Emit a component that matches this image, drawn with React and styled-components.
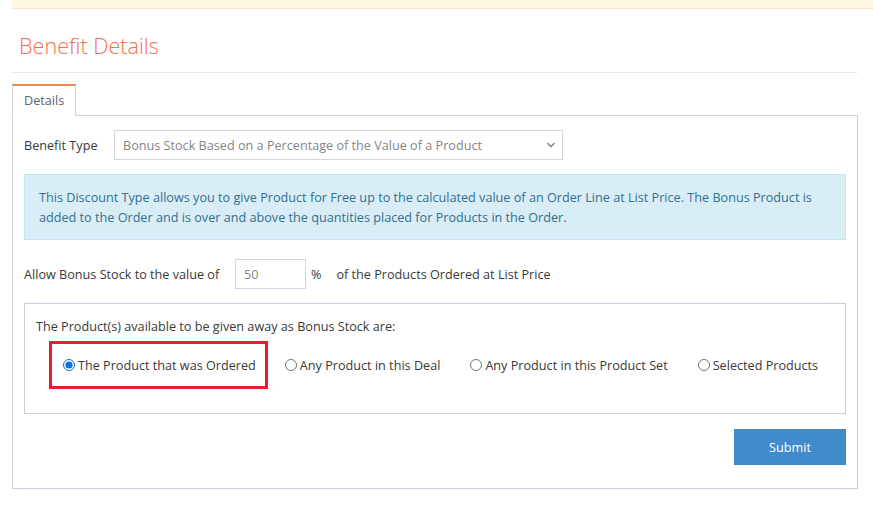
import React, {useState} from "react";
import styled, {createGlobalStyle} from "styled-components";

const baseSize = "12.65px";

const GlobalStyle = createGlobalStyle`
    html, body {
        margin: 0;
        padding: 0;
        background: #fff;
    }
    body {
        font-family: "Open Sans", "Liberation Sans", sans-serif;
        font-size: ${baseSize};
        color: #393939;
    }
    * {
        box-sizing: border-box;
    }
`;

const Page = styled.div`
    width: 873px;
    padding: 0 15px 0 12px;
`;

const AlertStrip = styled.div`
    height: 9px;
    margin-right: -15px;
    background: #fcf8e3;
    border-bottom: 1px solid #f6e6c3;
`;

const Header = styled.div`
    padding: 23px 0 12px 7px;
    border-bottom: 1px dotted #d9d9d9;
`;

const Title = styled.h1`
    margin: 0;
    font-family: "Open Sans", "Liberation Sans", sans-serif;
    font-weight: 300;
    font-size: 21.6px;
    line-height: 28px;
    color: #f2704c;
`;

const Tabs = styled.ul`
    list-style: none;
    margin: 11px 0 -1px;
    padding: 0;
    display: flex;
    position: relative;
    z-index: 1;
`;

const Tab = styled.li`
    height: 32px;
    padding: 0 11px 1px;
    display: flex;
    align-items: center;
    background: #fff;
    color: #576373;
    border: 1px solid #c5d0dc;
    border-top: 2px solid #f4844c;
    border-bottom-color: ${(props) => (props.active ? "#fff" : "#c5d0dc")};
`;

const Panel = styled.div`
    border: 1px solid #c5d0dc;
    padding: 14px 11px 23px;
`;

const FieldRow = styled.div`
    display: flex;
    align-items: center;
    white-space: nowrap;
    margin-top: ${(props) => props.top || "0px"};
`;

const Label = styled.label`
    width: ${(props) => props.width || "auto"};
    flex-shrink: 0;
`;

const SelectWrap = styled.div`
    position: relative;
    width: 449px;
`;

const Select = styled.select`
    appearance: none;
    width: 100%;
    height: 30px;
    padding: 0 30px 0 8px;
    border: 1px solid #d5d5d5;
    border-radius: 0;
    background: #fff;
    color: #858585;
    font-family: inherit;
    font-size: ${baseSize};
    outline: none;
`;

const Chevron = styled.svg`
    position: absolute;
    right: 7px;
    top: 11px;
    pointer-events: none;
`;

const InfoBox = styled.div`
    margin-top: 14px;
    padding: 12px 14px;
    background: #d9edf7;
    border: 1px solid #bce8f1;
    color: #31708f;
    line-height: 20px;
`;

const SmallInput = styled.input`
    width: 71px;
    height: 30px;
    padding: 0 8px;
    border: 1px solid #d5d5d5;
    color: #858585;
    font-family: inherit;
    font-size: ${baseSize};
    outline: none;
`;

const Unit = styled.span`
    margin: 0 15px 0 5px;
`;

const GroupBox = styled.div`
    margin-top: 14px;
    border: 1px solid #c5d0dc;
    padding: 13px 11px 24px;
`;

const GroupLabel = styled.div`
    line-height: 18px;
`;

const Options = styled.div`
    display: flex;
    align-items: center;
    gap: 30px;
    margin-top: 6px;
    padding-left: 13px;
    white-space: nowrap;
`;

const Highlight = styled.div`
    border: 3px solid #e3202a;
    padding: 12px 9px 12px 11px;
    margin-right: -13px;
    display: flex;
    align-items: center;
`;

const Option = styled.label`
    display: flex;
    align-items: center;
    line-height: 18px;
    cursor: pointer;
`;

const Radio = styled.input`
    width: 12px;
    height: 12px;
    margin: 0 3px 0 0;
    accent-color: #0a74da;
`;

const Footer = styled.div`
    display: flex;
    justify-content: flex-end;
    margin-top: 15px;
`;

const SubmitButton = styled.button`
    width: 112px;
    height: 36px;
    border: none;
    background: #428bca;
    color: #fff;
    font-family: inherit;
    font-size: ${baseSize};
    cursor: pointer;
`;

const options = [
    "The Product that was Ordered",
    "Any Product in this Deal",
    "Any Product in this Product Set",
    "Selected Products",
];

const App = () => {
    const [picked, setPicked] = useState(0);

    const renderOption = (text, i) => (
        <Option key={text}>
            <Radio type="radio" name="bonus" checked={picked === i} onChange={() => setPicked(i)}/>
            {text}
        </Option>
    );

    return (
        <>
            <GlobalStyle/>
            <Page>
                <AlertStrip/>
                <Header>
                    <Title>Benefit Details</Title>
                </Header>
                <Tabs>
                    <Tab active>Details</Tab>
                </Tabs>
                <Panel>
                    <FieldRow>
                        <Label width="90px">Benefit Type</Label>
                        <SelectWrap>
                            <Select defaultValue="pct">
                                <option value="pct">Bonus Stock Based on a Percentage of the Value of a Product</option>
                            </Select>
                            <Chevron width="10" height="8" viewBox="0 0 10 8">
                                <path d="M1.5 2 L5 5.5 L8.5 2" fill="none" stroke="#8a8a8a" strokeWidth="1.6"/>
                            </Chevron>
                        </SelectWrap>
                    </FieldRow>
                    <InfoBox>
                        This Discount Type allows you to give Product for Free up to the calculated value of an Order Line at List Price. The Bonus Product is added to the Order and is over and above the quantities placed for Products in the Order.
                    </InfoBox>
                    <FieldRow top="19px">
                        <Label width="211px">Allow Bonus Stock to the value of</Label>
                        <SmallInput defaultValue="50"/>
                        <Unit>%</Unit>
                        <span>of the Products Ordered at List Price</span>
                    </FieldRow>
                    <GroupBox>
                        <GroupLabel>The Product(s) available to be given away as Bonus Stock are:</GroupLabel>
                        <Options>
                            <Highlight>{renderOption(options[0], 0)}</Highlight>
                            {options.slice(1).map((o, i) => renderOption(o, i + 1))}
                        </Options>
                    </GroupBox>
                    <Footer>
                        <SubmitButton>Submit</SubmitButton>
                    </Footer>
                </Panel>
            </Page>
        </>
    );
};

export default App;
